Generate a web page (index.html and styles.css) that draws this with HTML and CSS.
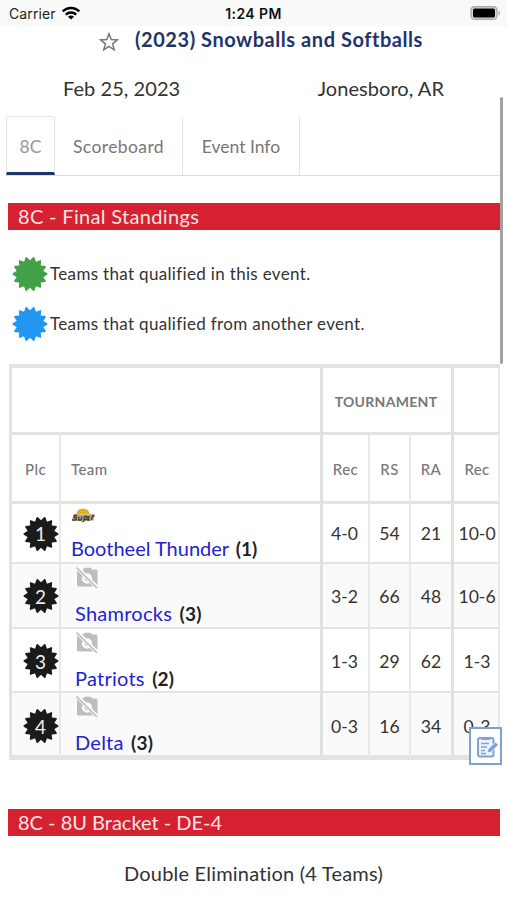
FILE: index.html
```
<!DOCTYPE html>
<html lang="en">
<head>
    <meta charset="UTF-8">
    <meta name="viewport" content="width=device-width, initial-scale=1.0">
    <title>(2023) Snowballs and Softballs</title>
    <link rel="stylesheet" href="styles.css">
</head>
<body>
    <svg class="defs" width="0" height="0">
        <symbol id="burst" viewBox="-18 -18 36 36">
            <path id="burst-path" stroke-width="1.6" stroke-linejoin="round" d=""/>
        </symbol>
        <symbol id="no-photo" viewBox="0 0 24 24">
            <path d="M2 5.2V20a1.5 1.5 0 0 0 1.500 1.500H18.300L14.600 17.800A5 5 0 0 1 7.700 10.900z"/>
            <path d="M7 4.500H8L9.500 2.700H15.500L17.200 4.500H21A1.500 1.500 0 0 1 22.500 6V20L17 14.500A5 5 0 0 0 11 8.500z"/>
            <path d="M9.500 12.700A3 3 0 0 0 12.800 16z"/>
            <path d="M1.500 2.500 22 23" fill="none" stroke="#bdbdbd" stroke-width="1.7"/>
        </symbol>
    </svg>
    <header class="status">
        <div class="carrier">Carrier
            <svg width="20" height="14" viewBox="0 0 20 14" fill="none" stroke="#000" stroke-width="2.4">
                <path d="M1.7 5.4a11.7 11.7 0 0 1 16.600 0M4.800 8.600a7.400 7.400 0 0 1 10.400 0"/>
                <path d="M10 13.600 7 10.700a4.200 4.200 0 0 1 6 0z" fill="#000" stroke="none"/>
            </svg>
        </div>
        <div class="clock">1:24 PM</div>
        <svg class="battery" width="31" height="14" viewBox="0 0 31 14">
            <rect x="1" y=".7" width="26" height="12.6" rx="3.5" fill="#ddd" stroke="#aaa" stroke-width="1.4"/>
            <rect x="3" y="2.6" width="22" height="8.8" rx="1.5"/>
            <path d="M28.500 4.500c2 .8 2 4.200 0 5z" fill="#aaa"/>
        </svg>
    </header>

    <div class="title">
        <svg width="20" height="20" viewBox="0 0 20 20" fill="none" stroke="#777" stroke-width="1.5">
            <path d="M10 1.800 12.200 7.600 18.400 7.900 13.600 11.800 15.200 17.800 10 14.400 4.800 17.800 6.400 11.800 1.600 7.900 7.800 7.600z"/>
        </svg>
        <h1>(2023) Snowballs and Softballs</h1>
    </div>
    <div class="info">
        <span class="date">Feb 25, 2023</span>
        <span class="place">Jonesboro, AR</span>
    </div>

    <nav class="tabs">
        <a class="tab active">8C</a>
        <a class="tab scoreboard">Scoreboard</a>
        <a class="tab event">Event Info</a>
    </nav>

    <main>
        <h2 class="banner standings">8C - Final Standings</h2>
        <div class="legend">
            <svg class="green" width="36" height="36"><use href="#burst"/></svg>
            <span>Teams that qualified in this event.</span>
        </div>
        <div class="legend">
            <svg class="blue" width="36" height="36"><use href="#burst"/></svg>
            <span>Teams that qualified from another event.</span>
        </div>

        <table>
            <colgroup><col class="c-plc"><col class="c-team"><col class="c-rec"><col class="c-rs"><col class="c-ra"><col class="c-last"></colgroup>
            <tr class="groups">
                <th colspan="2"></th>
                <th colspan="3">TOURNAMENT</th>
                <th></th>
            </tr>
            <tr class="heads">
                <th>Plc</th><th>Team</th><th>Rec</th><th>RS</th><th>RA</th><th>Rec</th>
            </tr>
            <tr class="row1">
                <td><div class="place-badge"><svg width="36" height="36"><use href="#burst"/></svg><b>1</b></div></td>
                <td class="team first">
                    <svg width="24" height="16" viewBox="0 0 24 16">
                        <path d="M5.500 6a6.500 5.500 0 0 1 13 0z" fill="#e8ae18"/>
                        <path d="M2.500 6h21l-1 6.500-9 .5-2 2-1.500-2-9-.5z" fill="#b5aa8c"/>
                        <path d="M6 7.500H3.500L3 9.500h2.500L5 12H1M8 8.500 7.500 12h2.500l1-3.500M12.500 14l1-5.500h2.500l-.5 3h-2.500M19 9h-1.500L17 12h2M20.500 12l1-4h2" fill="none" stroke="#463c2b" stroke-width="1.3"/>
                        <path d="M8 6.200h13" stroke="#d8cba0"/>
                    </svg>
                    <p><a>Bootheel Thunder</a> <b>(1)</b></p>
                </td>
                <td>4-0</td><td>54</td><td>21</td><td>10-0</td>
            </tr>
            <tr class="row2">
                <td><div class="place-badge"><svg width="36" height="36"><use href="#burst"/></svg><b>2</b></div></td>
                <td class="team"><svg width="24" height="24"><use href="#no-photo"/></svg><p><a>Shamrocks</a> <b>(3)</b></p></td>
                <td>3-2</td><td>66</td><td>48</td><td>10-6</td>
            </tr>
            <tr class="row3">
                <td><div class="place-badge"><svg width="36" height="36"><use href="#burst"/></svg><b>3</b></div></td>
                <td class="team"><svg width="24" height="24"><use href="#no-photo"/></svg><p><a>Patriots</a> <b>(2)</b></p></td>
                <td>1-3</td><td>29</td><td>62</td><td>1-3</td>
            </tr>
            <tr class="row4">
                <td><div class="place-badge"><svg width="36" height="36"><use href="#burst"/></svg><b>4</b></div></td>
                <td class="team"><svg width="24" height="24"><use href="#no-photo"/></svg><p><a>Delta</a> <b>(3)</b></p></td>
                <td>0-3</td><td>16</td><td>34</td><td>0-3</td>
            </tr>
        </table>

        <h2 class="banner">8C - 8U Bracket - DE-4</h2>
        <p class="format">Double Elimination (4 Teams)</p>
    </main>

    <div class="scrollbar"></div>
    <button class="notes" aria-label="Notes">
        <svg width="24" height="24" viewBox="0 0 24 24" fill="none" stroke="#7da2d8" stroke-width="2">
            <rect x="2" y="3" width="15.500" height="18.500" rx="2" fill="#edf4ff"/>
            <path d="M5.500 2h8.500v3H5.500z" fill="#7da2d8" stroke="none"/>
            <path d="M5 8.500h8M5 12h6M5 15.500h4M5 18.500h5" stroke-width="1.300"/>
            <path d="m11 18 1-4 7.500-7 3 3-7.500 7z" fill="#7da2d8" stroke="#fff" stroke-width=".8"/>
        </svg>
    </button>
    <script>
        // 14-point starburst shared by the legend and the place badges
        let d = "";
        for (let i = 0; i < 28; i++) {
            const r = i % 2 ? 16.7 : 12.6;
            const a = i * Math.PI / 14 - Math.PI / 2;
            d += (i ? "L" : "M") + (r * Math.cos(a)).toFixed(2) + " " + (r * Math.sin(a)).toFixed(2);
        }
        document.getElementById("burst-path").setAttribute("d", d + "z");
    </script>
</body>
</html>
```
FILE: styles.css
```
* {
    box-sizing: border-box;
}
body {
    margin: 0;
    height: 900px;
    overflow: hidden;
    position: relative;
    background: #fff;
    color: #333;
    font-family: Lato, sans-serif;
    font-size: 19px;
    font-variant-ligatures: none;
}
h1, h2, p {
    margin: 0;
    font-weight: normal;
}
.defs {
    position: absolute;
}
.status {
    height: 26px;
    display: grid;
    grid-template-columns: 1fr auto 1fr;
    align-items: center;
    padding: 1px 6px 0 9px;
    background: #f9f9f9;
    color: #222;
    font-family: Inter, sans-serif;
    font-size: 14px;
}
.carrier {
    display: flex;
    align-items: center;
    gap: 6px;
    letter-spacing: 0.1px;
}
.carrier svg {
    margin: -2px 0 0 -1px;
}
.clock {
    font-weight: 600;
    color: #111;
    letter-spacing: 0.4px;
    margin-right: 3px;
}
.battery {
    justify-self: end;
    margin-top: -2px;
}
.title {
    display: flex;
    align-items: center;
    height: 30px;
    padding-left: 99px;
    gap: 16px;
}
.title svg {
    margin-top: 2px;
}
h1 {
    font-size: 20px;
    line-height: 28px;
    font-weight: bold;
    color: #1f3468;
    letter-spacing: 0.55px;
    margin-top: -4px;
    white-space: nowrap;
}
.info {
    display: flex;
    justify-content: space-between;
    height: 60px;
    padding: 18px 63px 0 63px;
    font-size: 20px;
    line-height: 28px;
    letter-spacing: 0.05px;
}
.tabs {
    display: flex;
    height: 60px;
    margin: 0 7px 0 6px;
    border-bottom: 1px solid #ddd;
    color: #777;
    font-size: 17.5px;
}
.tab {
    border-right: 1px solid #e5e5e5;
    text-align: center;
    line-height: 61px;
}
.active {
    width: 49px;
    height: 59px;
    border: 1px solid #e5e5e5;
    border-bottom: 3px solid #1f3468;
    border-radius: 3px 3px 0 0;
    color: #999;
    line-height: 59px;
}
.scoreboard {
    width: 128px;
    letter-spacing: 0.4px;
}
.event {
    width: 117px;
}
main {
    padding: 27px 7px 0 8px;
}
.banner {
    height: 27px;
    padding-left: 10px;
    margin-bottom: 19px;
    background: #d52130;
    color: #fbe3e5;
    font-size: 20px;
    line-height: 27px;
}
.standings {
    letter-spacing: 0.33px;
}
.legend {
    display: flex;
    align-items: center;
    height: 50px;
    padding-left: 4px;
    gap: 2px;
    font-size: 17px;
    letter-spacing: 0.33px;
}
.legend span {
    margin-top: -1px;
}
.green {
    fill: #43a047;
    stroke: #43a047;
}
.blue {
    fill: #2196f3;
    stroke: #2196f3;
}
table {
    width: 491px;
    margin: 15px 0 49px 1px;
    table-layout: fixed;
    border-collapse: separate;
    border-spacing: 0;
    border-top: 4px solid #e3e3e3;
    border-left: 3px solid #e3e3e3;
}
.c-plc { width: 49px; }
.c-team { width: 262px; }
.c-rec { width: 47px; }
.c-rs { width: 41px; }
.c-ra { width: 43px; }
.c-last { width: 46px; }
th, td {
    padding: 0;
    text-align: center;
    border-right: 2px solid #e8e8e8;
    border-bottom: 2px solid #e3e3e3;
    white-space: nowrap;
}
td {
    font-size: 17.6px;
    padding-top: 1px;
}
td:nth-child(3) {
    padding-right: 2px;
}
th {
    color: #777;
    font-size: 15px;
    font-weight: 500;
    letter-spacing: 0.4px;
    border-bottom-width: 3px;
    padding-top: 2px;
}
.groups th {
    font-weight: bold;
    font-size: 14px;
    letter-spacing: 0.3px;
    padding-right: 2px;
    border-right: 3px solid #e0e0e0;
}
.groups th:last-child {
    border-right: 2px solid #e8e8e8;
}
.heads th:nth-child(2), td:nth-child(2), .heads th:nth-child(5), td:nth-child(5) {
    border-right: 3px solid #e0e0e0;
}
.heads th:nth-child(2) {
    text-align: left;
    padding-left: 10px;
}
.heads th:last-child, td:last-child {
    padding-left: 2px;
}
.groups { height: 67px; }
.heads { height: 69px; }
.row1 { height: 60px; }
.row2 { height: 65px; }
.row3 { height: 64px; }
.row4 { height: 67px; }
.row2 td, .row4 td {
    background: #fafafa;
}
.row4 td {
    border-bottom: 5px solid #e3e3e3;
}
.row3 td {
    padding-top: 2px;
}
.row4 td {
    padding-top: 4px;
}
.place-badge {
    display: grid;
    place-items: center;
    padding-left: 10px;
    fill: #1a1a1a;
    stroke: #1a1a1a;
}
.place-badge svg, .place-badge b {
    grid-area: 1 / 1;
}
.place-badge b {
    color: #eee;
    font-size: 19px;
    font-weight: normal;
}
tr td.team {
    text-align: left;
    vertical-align: top;
    padding: 1px 0 0 14px;
    font-size: 20px;
    letter-spacing: 0.25px;
}
.team svg {
    display: block;
    fill: #bdbdbd;
}
.team p {
    margin-top: 11px;
    margin-bottom: -6px;
    line-height: 26px;
}
.team a {
    color: #2222d4;
}
.team b {
    color: #222;
    font-size: 19px;
    font-weight: bold;
    margin-left: 2px;
}
tr td.first {
    padding-left: 10px;
    letter-spacing: 0;
}
.first svg {
    margin-top: 3px;
}
.format {
    text-align: center;
    font-size: 20px;
    letter-spacing: 0.2px;
    line-height: 37px;
    padding-right: 1px;
}
.scrollbar {
    position: absolute;
    top: 97px;
    right: 4px;
    width: 3px;
    height: 267px;
    border-radius: 2px;
    background: #a2a2a2;
}
.notes {
    position: absolute;
    left: 469px;
    top: 727px;
    width: 33px;
    height: 38px;
    padding: 5px 0 0 5px;
    border: 2px solid #7da2d0;
    background: #fff;
}
```
